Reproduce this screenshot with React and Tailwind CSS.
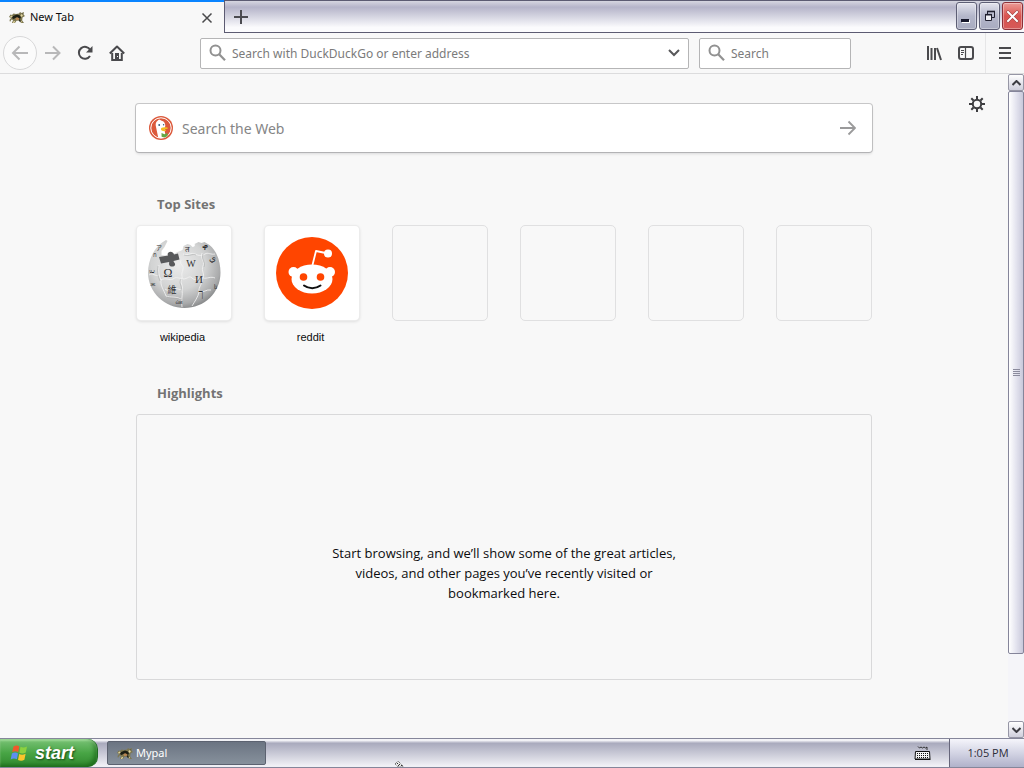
import React from "react";

const DragonIcon = () => (
  <svg width="16" height="16" viewBox="0 0 16 16" aria-hidden="true">
    <path d="M0 7l1.500-2.500L3 5l1.500-1.500L7 4l3-.5L11 2l1.500 1L15 2l-.5 2.500L16 6l-2.500 1.500-.3 3L15 13h-3l-1.500-2.500-3 .2L6 13H3l1-3-1.500-.5L1 12l-.5-2L2 8z" fill="#7d7750" />
    <path d="M4 6L8 4.500l3 1 1 2.500-1.500 1-3-1.500-3 1.500L3 8z" fill="#1b1d12" />
    <path d="M6.500 8l2-.8 2 1.300-.8 1.500H7z" fill="#b98550" />
    <path d="M1 6.800l1.600-1.400 1 .9L2 7.700zM11.400 5.200l1.800-1.400.6 2-1.300 1.200zM4.800 10.800l1.300.4-.9 1.700H3.900zM12 10.500l1.200 1.800h-1.200z" fill="#e2d6a0" />
    <path d="M11 9l.8 2.400-1.200.4-1-1.800zM13 4l1-.6.2 1z" fill="#25261a" />
  </svg>
);

const SearchIcon = () => (
  <svg width="18" height="18" viewBox="0 0 18 18" fill="none" stroke="#919191" aria-hidden="true">
    <circle cx="6.500" cy="6.500" r="5" strokeWidth="2" />
    <path d="M10.200 10.200L16 16.200" strokeWidth="2.200" />
  </svg>
);

const DuckIcon = () => (
  <svg width="24" height="24" viewBox="0 0 24 24" aria-hidden="true">
    <circle cx="12" cy="12" r="12" fill="#dc5a3c" />
    <circle cx="12" cy="12" r="10.2" fill="none" stroke="#fff" strokeWidth="1" />
    <path d="M9.200 21.500L6.800 10C6.300 6.400 8 4.200 10.800 4.500c3.600 0 5.600 2.200 5.500 5.300l-.8 4 1.300 7.300A10 10 0 0 1 9.200 21.500z" fill="#fff" />
    <path d="M8 5.300l2.200-1.700 1.800.8-1 1.400z" fill="#fff" />
    <path d="M12.200 12c1.800-1.100 4-.8 6-.6 1.100.3.8 1.200-.6 1.600l-2.800.6 2.400.5-.8 1c-2.200.2-4-.2-4.400-1.300z" fill="#f5bd22" />
    <path d="M12.500 17l3 1.300 2.700-1.200.4 3-3 1.400-3-.8z" fill="#64a845" />
    <circle cx="10.200" cy="9" r=".9" fill="#315a78" />
    <circle cx="14.600" cy="8.700" r=".7" fill="#315a78" />
  </svg>
);

const WikipediaLogo = () => (
  <svg width="74" height="72" viewBox="0 0 74 72" aria-hidden="true">
    <defs>
      <radialGradient id="globe" cx=".42" cy=".36" r=".68">
        <stop offset="0" stopColor="#ececec" />
        <stop offset=".55" stopColor="#d2d3d3" />
        <stop offset=".85" stopColor="#a9aaab" />
        <stop offset="1" stopColor="#808283" />
      </radialGradient>
    </defs>
    <path
      d="M19 3l1.500 1-3 6-3 4v4l8 1 8-4 5-2 1-4 4-2 3 1 2 2c2 0 3-2 2-3l4-2 3 1 3-1 5 3C70 14 73.500 25 73.500 35.500 73.500 56 57 71 37.500 71S1 55.500 1 35.500C1 22 8 9 19 3z"
      fill="url(#globe)"
    />
    <path d="M12 20l9-1.500c-2-4 5-5.500 6-1l4-1 1.500 6-6 1.500c0 1 2 2 1.500 4-1 2.500-6 2-6-1 0-1 .5-1.500 0-2l-8 1.500z" fill="#58595b" />
    <g fill="none" stroke="#f4f4f4" strokeWidth=".8">
      <path d="M12 28c-1 6 0 11 2 15 5-3 8 1 12-1 4-3 5 0 9-1M34 23c-2 5 3 5 2 9s-2 6 0 10c5 0 6-4 9-1s6 1 11 0" />
      <path d="M35 41c-3 5 2 7 0 12-5-1-8-3-9 0s-5 1-8-1M35 53c1 5-1 8 0 17M55 16c-2 6 3 8 1 13s2 8 0 12c4 1 8-2 12 0M55 41c1 6-4 9-3 14 5 1 7-3 12-2" />
      <path d="M36 17c6 2 8-2 12 0s7 2 10 0 6 1 10 0M14 42c-1 7 3 11 5 17 5 2 9 0 15 3M52 55c-1 5-4 9-7 14M2 38c4-3 6 2 10 0" />
    </g>
    <g fill="none" stroke="#98999a" strokeWidth=".4">
      <path d="M11 29c-1 6 0 11 2 15M34 42c-3 5 2 7 0 12M56 17c-2 6 3 8 1 13M20 60c5 2 9 0 15 3M37 18c6 2 8-2 12 0" />
    </g>
    <g fill="#303133" textAnchor="middle" fontFamily="Liberation Serif, Noto Sans CJK SC, serif">
      <text x="21" y="40" fontSize="12">Ω</text>
      <text x="44" y="30" fontSize="10">W</text>
      <text x="52" y="46" fontSize="11">И</text>
      <text x="25" y="56" fontSize="9">維</text>
      <text x="40" y="15" fontSize="8">त</text>
      <text x="58" y="13" fontSize="9">ቀ</text>
      <text x="65" y="24" fontSize="9">ي</text>
      <text x="54" y="60" fontSize="10">ך</text>
      <text x="68" y="52" fontSize="6">ს</text>
      <text x="12" y="13" fontSize="6">ア</text>
      <text x="8" y="20" fontSize="6">ก</text>
      <text x="5" y="35" fontSize="7">ய</text>
      <text x="6" y="49" fontSize="7">ж</text>
      <text x="32" y="67" fontSize="6">ώи</text>
    </g>
  </svg>
);

const RedditLogo = () => (
  <svg width="72" height="72" viewBox="0 0 72 72" aria-hidden="true">
    <circle cx="36" cy="36" r="36" fill="#ff4500" />
    <g fill="#fff">
      <ellipse cx="36" cy="42" rx="20.500" ry="14.500" />
      <circle cx="17.500" cy="35" r="5" />
      <circle cx="54" cy="35" r="5" />
      <circle cx="52" cy="16.500" r="4" />
    </g>
    <path d="M36.500 28L40 14l12 2.500" fill="none" stroke="#fff" strokeWidth="1.800" strokeLinejoin="round" />
    <circle cx="27.500" cy="40" r="3.800" fill="#ff4500" />
    <circle cx="44.500" cy="40" r="3.800" fill="#ff4500" />
    <path d="M28 48.500c4.500 3.500 12 3.500 16.500 0" fill="none" stroke="#111" strokeWidth="2" strokeLinecap="round" />
  </svg>
);

const WindowsFlag = () => (
  <svg width="19" height="18" viewBox="0 0 19 18" aria-hidden="true">
    <path d="M3.500 2.500Q6.500.5 9.300 2.200L8.200 8.200Q5.200 6.500 2.200 8.300z" fill="#f0592b" />
    <path d="M10.500 2.800Q13.500 4.300 17 2.500L15.800 8.600Q12.500 10.200 9.400 8.800z" fill="#8cd13f" />
    <path d="M1.900 9.500Q5 7.800 8 9.400L6.900 15.300Q4 13.700.7 15.400z" fill="#5d8ff0" />
    <path d="M9.200 10Q12.200 11.500 15.600 9.800L14.400 15.800Q11.300 17.600 8 16z" fill="#fbc52c" />
  </svg>
);

const NavButton = ({ label, children, className = "" }) => (
  <button type="button" aria-label={label} className={`flex h-8 w-8 items-center justify-center ${className}`}>
    {children}
  </button>
);

const WindowButton = ({ label, color, children }) => (
  <button
    type="button"
    aria-label={label}
    className={`flex h-7 w-[21px] items-center justify-center rounded-[3px] border shadow-[inset_0_0_0_1px_rgba(255,255,255,0.35)] ${color}`}
  >
    {children}
  </button>
);

const TitleBar = () => {
  const silver = "border-[#5d5e75] bg-linear-to-b from-[#e4e4ee] via-[#b4b6ca] to-[#a8abc0]";
  return (
    <header className="flex h-[33px]">
      <div className="flex w-[224px] items-center border-t-2 border-[#0a84ff] bg-[#f8f8f8] pl-[9px] pr-[7px]">
        <DragonIcon />
        <span className="ml-[5px] flex-1 text-[11px] text-[#0c0c0d]">New Tab</span>
        <button type="button" aria-label="Close tab" className="flex h-5 w-5 items-center justify-center">
          <svg width="12" height="12" viewBox="0 0 12 12" stroke="#4a4a4c" strokeWidth="1.500">
            <path d="M1.500 1.500l9 9M10.500 1.500l-9 9" />
          </svg>
        </button>
      </div>
      <div className="flex flex-1 items-start border-y border-l border-[#5c5b72] bg-linear-to-b from-[#d6d6e0] from-0% via-[#b5b4c9] via-20% to-[#fbfbfd] to-85%">
        <NavButton label="New tab">
          <svg width="14" height="14" viewBox="0 0 14 14" stroke="#4b4b50" strokeWidth="2">
            <path d="M7 0v14M0 7h14" />
          </svg>
        </NavButton>
        <div className="ml-auto flex gap-[2px] pr-px pt-px">
          <WindowButton label="Minimize" color={silver}>
            <svg width="13" height="14" viewBox="0 0 13 14">
              <path d="M2 11h8v3H2z" fill="#fff" />
              <path d="M1 10h8v3H1z" fill="#17172b" />
            </svg>
          </WindowButton>
          <WindowButton label="Restore" color={silver}>
            <svg width="12" height="12" viewBox="0 0 12 12" fill="none" stroke="#20202f">
              <path d="M3.500 4V1.500h7v6H8" />
              <path d="M3 1.500h8" strokeWidth="1.600" />
              <path d="M1.500 4.500h6v6h-6z" fill="#f1f1f6" />
              <path d="M1 4.700h7" strokeWidth="1.600" />
            </svg>
          </WindowButton>
          <WindowButton label="Close" color="border-[#8d3038] bg-linear-to-b from-[#eb9a96] via-[#d9534f] to-[#d65a58]">
            <svg width="13" height="13" viewBox="0 0 13 13" strokeLinecap="square">
              <path d="M2 2l9 9M11 2l-9 9" stroke="#8f3434" strokeWidth="3" />
              <path d="M2 2l9 9M11 2l-9 9" stroke="#fff" strokeWidth="2" />
            </svg>
          </WindowButton>
        </div>
      </div>
    </header>
  );
};

const NavBar = () => (
  <nav className="flex h-[41px] items-center border-b border-[#dcdcdd] bg-[#f8f8f8] pl-[3px] pr-[3px]">
    <button
      type="button"
      aria-label="Back"
      className="flex h-[34px] w-[34px] items-center justify-center rounded-full border border-[#d8d8d9] bg-[#fbfbfb]"
    >
      <svg width="18" height="16" viewBox="0 0 18 16" fill="none" stroke="#b8b8b9" strokeWidth="2">
        <path d="M17 8H2M8.500 1.500L2 8l6.500 6.500" />
      </svg>
    </button>
    <NavButton label="Forward">
      <svg width="16" height="16" viewBox="0 0 16 16" fill="none" stroke="#b8b8b9" strokeWidth="2">
        <path d="M0 8h14M8 1.500L14.500 8 8 14.500" />
      </svg>
    </NavButton>
    <NavButton label="Reload">
      <svg width="16" height="16" viewBox="0 0 16 16" fill="none">
        <path d="M13.200 5A6 6 0 1 0 13 11" stroke="#4a4a4d" strokeWidth="2" />
        <path d="M15.500 1v6.500H9z" fill="#4a4a4d" />
      </svg>
    </NavButton>
    <NavButton label="Home">
      <svg width="16" height="16" viewBox="0 0 16 16" fill="none" stroke="#4a4a4d" strokeWidth="2">
        <path d="M.8 8.500L8 1.500l7.200 7" strokeLinejoin="round" />
        <path d="M3.200 8v7h9.600V8" />
        <path d="M6 8h4v6H6z" fill="#4a4a4d" stroke="none" />
        <path d="M8 11h1v1H8z" fill="#f8f8f8" stroke="none" />
      </svg>
    </NavButton>
    <div className="ml-[67px] flex h-[31px] min-w-0 flex-1 items-center rounded-[2px] border border-[#b5b5b6] bg-white pl-2 pr-2">
      <SearchIcon />
      <input
        type="text"
        aria-label="Address"
        placeholder="Search with DuckDuckGo or enter address"
        className="ml-[5px] min-w-0 flex-1 pt-px text-[12px] outline-none placeholder:text-[#7b7b7b]"
      />
      <button type="button" aria-label="Show history">
        <svg width="12" height="8" viewBox="0 0 12 8" fill="none" stroke="#58585a" strokeWidth="2">
          <path d="M1 1l5 5 5-5" />
        </svg>
      </button>
    </div>
    <div className="ml-[10px] flex h-[31px] w-[152px] items-center rounded-[2px] border border-[#b5b5b6] bg-white pl-2">
      <SearchIcon />
      <input
        type="text"
        aria-label="Search"
        placeholder="Search"
        className="ml-[5px] min-w-0 flex-1 pt-px text-[12px] outline-none placeholder:text-[#7b7b7b]"
      />
    </div>
    <NavButton label="Library" className="ml-[67px]">
      <svg width="16" height="16" viewBox="0 0 16 16" stroke="#4a4a4d" strokeWidth="2">
        <path d="M2 1v14M5.500 3v12M9 3v12M11 3l4 12" />
      </svg>
    </NavButton>
    <NavButton label="Sidebars">
      <svg width="16" height="14" viewBox="0 0 16 14" fill="none" stroke="#4a4a4d">
        <rect x="1" y="1" width="14" height="12" rx="2" strokeWidth="2" />
        <path d="M7.500 1v12" strokeWidth="1.200" />
        <path d="M3 4.500h3M3 6.500h3M3 8.500h2" strokeWidth="1" />
      </svg>
    </NavButton>
    <div className="ml-[3px] h-full w-px bg-[#e6e6e7]" />
    <NavButton label="Open menu" className="ml-[3px]">
      <svg width="12" height="12" viewBox="0 0 12 12" stroke="#4a4a4d" strokeWidth="2">
        <path d="M0 1h12M0 6h12M0 11h12" />
      </svg>
    </NavButton>
  </nav>
);

const sites = [
  { name: "wikipedia", Logo: WikipediaLogo },
  { name: "reddit", Logo: RedditLogo },
];

const NewTabPage = () => (
  <main className="relative flex-1 bg-[#f8f8f8] px-16 pb-[58px] pt-[30px]">
    <button type="button" aria-label="Customize page" className="absolute right-[23px] top-[22px]">
      <svg width="16" height="16" viewBox="0 0 16 16" fill="none" stroke="#3d3d40">
        <circle cx="8" cy="8" r="4.200" strokeWidth="2" />
        <path
          d="M8 0v3M8 13v3M0 8h3M13 8h3M2.300 2.300l2.200 2.200M11.500 11.500l2.200 2.200M13.700 2.300l-2.200 2.200M4.500 11.500l-2.200 2.200"
          strokeWidth="2"
        />
      </svg>
    </button>
    <div className="mx-auto max-w-[736px]">
      <form
        className="flex h-12 items-center rounded-[3px] bg-white pl-[13px] pr-4 shadow-[0_0_0_1px_rgba(12,12,13,0.2),0_2px_3px_rgba(12,12,13,0.12)]"
        onSubmit={(e) => e.preventDefault()}
      >
        <DuckIcon />
        <input
          type="search"
          aria-label="Search the Web"
          placeholder="Search the Web"
          className="ml-[9px] min-w-0 flex-1 text-[14px] outline-none placeholder:text-[#858586]"
        />
        <button type="submit" aria-label="Submit search">
          <svg width="16" height="16" viewBox="0 0 16 16" fill="none" stroke="#9a9a9b" strokeWidth="1.800">
            <path d="M0 8h15M8.500 1.500L15 8l-6.500 6.500" />
          </svg>
        </button>
      </form>

      <h2 className="mt-[42px] pl-[21px] font-['Open_Sans',sans-serif] text-[13px] font-bold leading-5 text-[#737373]">
        Top Sites
      </h2>
      <ul className="mt-[11px] grid grid-cols-6 gap-8">
        {sites.map(({ name, Logo }) => (
          <li key={name}>
            <a href={`#${name}`} className="block text-center">
              <span className="flex h-24 items-center justify-center rounded-[5px] bg-white shadow-[inset_0_0_0_1px_rgba(12,12,13,0.08),0_1px_3px_rgba(12,12,13,0.1)]">
                <Logo />
              </span>
              <span className="mt-[6px] block pr-[3px] font-['Liberation_Sans',sans-serif] text-[11px] leading-5 text-[#0c0c0d]">
                {name}
              </span>
            </a>
          </li>
        ))}
        {[0, 1, 2, 3].map((slot) => (
          <li key={slot} className="h-24 rounded-[5px] border border-[#e0e0e1]" />
        ))}
      </ul>

      <h2 className="mt-9 pl-[21px] font-['Open_Sans',sans-serif] text-[13px] font-bold leading-5 text-[#737373]">
        Highlights
      </h2>
      <div className="mt-[11px] flex h-[266px] justify-center rounded-[3px] border border-[#d9d9da] pt-[128px]">
        <p className="w-[350px] text-center font-['Open_Sans',sans-serif] text-[13px] leading-5 text-[#0c0c0d]">
          Start browsing, and we’ll show some of the great articles, videos, and other pages you’ve recently visited or
          bookmarked here.
        </p>
      </div>
    </div>
  </main>
);

const ScrollArrow = ({ label, d }) => (
  <button
    type="button"
    aria-label={label}
    className="flex h-[17px] w-full items-center justify-center rounded-[2px] border border-[#9696a5] bg-linear-to-b from-white to-[#cfcfdc]"
  >
    <svg width="9" height="6" viewBox="0 0 9 6" fill="none" stroke="#3c3c42" strokeWidth="2">
      <path d={d} />
    </svg>
  </button>
);

const ScrollBar = () => (
  <aside aria-label="Scrollbar" className="flex w-4 flex-col bg-[#f5f5f9]">
    <ScrollArrow label="Scroll up" d="M.5 5l4-4 4 4" />
    <div className="flex flex-1 flex-col">
      <div className="flex flex-[563] items-center justify-center rounded-[2px] border border-[#85859a] bg-linear-to-r from-white via-[#e4e4ef] to-[#c9c9db]">
        <svg width="7" height="8" viewBox="0 0 7 8" stroke="#8b8b9d">
          <path d="M0 .5h7M0 2.500h7M0 4.500h7M0 6.500h7" />
        </svg>
      </div>
      <div className="flex-[67]" />
    </div>
    <ScrollArrow label="Scroll down" d="M.5 1l4 4 4-4" />
  </aside>
);

const TaskBar = () => (
  <footer className="relative flex h-[30px] border-y border-[#85869a] bg-linear-to-b from-[#f4f4f8] from-5% via-[#a9aabd] via-15% to-[#f0f0f5] to-95%">
    <button
      type="button"
      className="flex w-[98px] items-center rounded-r-[10px] border-r border-[#1e6b20] bg-linear-to-b from-[#79c377] via-[#48a545] to-[#2f872d] pl-[10px] shadow-[inset_-3px_-2px_4px_rgba(0,70,0,0.45),inset_0_2px_2px_rgba(190,240,180,0.6)]"
    >
      <WindowsFlag />
      <span className="ml-[6px] font-['Liberation_Sans',sans-serif] text-[18px] font-bold italic leading-6 text-white [text-shadow:1px_1px_2px_rgba(0,40,0,0.7)]">
        start
      </span>
    </button>
    <button
      type="button"
      className="my-[2px] ml-[9px] flex w-[159px] items-center rounded-[2px] border border-[#5c6270] bg-linear-to-b from-[#6b7482] to-[#87919c] pl-[9px] pt-px text-[11px] text-white"
    >
      <DragonIcon />
      <span className="ml-[3px]">Mypal</span>
    </button>
    <svg className="absolute bottom-0 left-[394px]" width="10" height="6" viewBox="0 0 10 6" aria-hidden="true">
      <path d="M1 3l3-3 5 5v1H4z" fill="#e8e8e8" stroke="#444" strokeWidth="1" strokeDasharray="1 1" />
      <path d="M3 2h1v1H3zM5 3h1v1H5zM4 4h1v1H4zM7 4h1v1H7z" fill="#333" />
    </svg>
    <div className="ml-auto flex items-center pr-[18px]">
      <button type="button" aria-label="Keyboard layout">
        <svg width="17" height="14" viewBox="0 0 17 14" fill="none" stroke="#111">
          <path d="M4 .5l1.500 1.500L7 1l1.500 1L10 1l1.500 1L13 1v3" strokeWidth=".8" />
          <path d="M1.500 5.500h14l.500 7.500H1z" fill="#f5f5f5" />
          <path d="M3 7.500h11M3 9.500h11M3 11.500h11" strokeWidth="1" strokeDasharray="1 1" />
          <path d="M1 13.500h15.500" />
        </svg>
      </button>
    </div>
    <div className="flex w-[75px] items-center justify-center border-l border-[#66667a] bg-linear-to-b from-[#f5f5fb] via-[#d3d4e4] to-[#b0b2ca] pl-[2px] font-['Open_Sans',sans-serif] text-[11px] text-[#2c2c38]">
      <time>1:05 PM</time>
    </div>
  </footer>
);

export default function App() {
  return (
    <div className="flex min-h-screen flex-col bg-[#f8f8f8] font-['Noto_Sans',sans-serif]">
      <TitleBar />
      <NavBar />
      <div className="flex flex-1">
        <NewTabPage />
        <ScrollBar />
      </div>
      <TaskBar />
    </div>
  );
}
